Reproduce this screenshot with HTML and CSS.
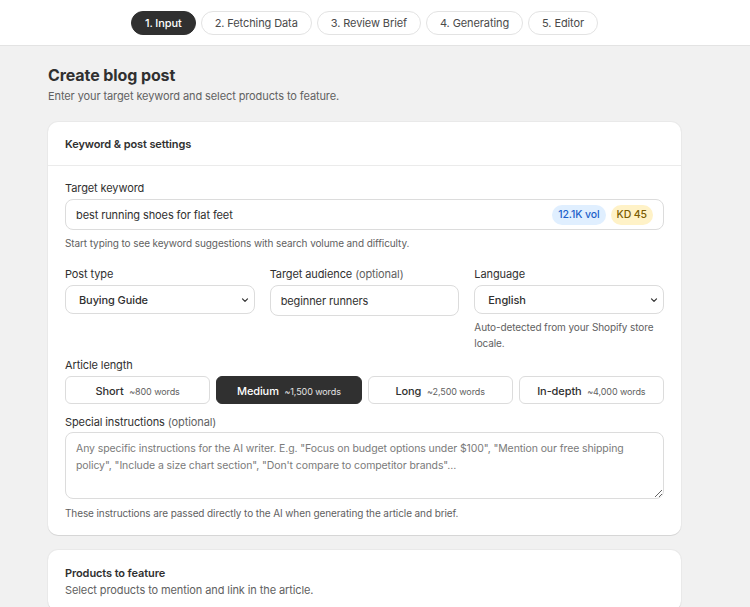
FILE: index.html
```html
<!DOCTYPE html>
<html lang="en">
<head>
    <meta charset="UTF-8">
    <meta name="viewport" content="width=device-width, initial-scale=1.0">
    <title>Create blog post</title>
    <link rel="stylesheet" href="styles.css">
</head>
<body>
    <div class="topbar">
        <div class="steps">
            <span class="step active">1. Input</span>
            <span class="step">2. Fetching Data</span>
            <span class="step">3. Review Brief</span>
            <span class="step">4. Generating</span>
            <span class="step">5. Editor</span>
        </div>
    </div>

    <div class="page">
        <h1 class="page-title">Create blog post</h1>
        <p class="page-sub">Enter your target keyword and select products to feature.</p>

        <div class="card">
            <div class="card-header">Keyword &amp; post settings</div>
            <div class="card-body">
                <div class="field">
                    <label class="label">Target keyword</label>
                    <div class="input keyword-input">
                        <span class="value">best running shoes for flat feet</span>
                        <span class="badge badge-blue">12.1K vol</span>
                        <span class="badge badge-yellow">KD 45</span>
                    </div>
                    <p class="help">Start typing to see keyword suggestions with search volume and difficulty.</p>
                </div>

                <div class="row-3">
                    <div class="field">
                        <label class="label">Post type</label>
                        <div class="input select">
                            <span class="value strong">Buying Guide</span>
                            <svg class="chevron" width="10" height="10" viewBox="0 0 10 10"><path d="M2.5 3.8 5 6.3 7.5 3.8" fill="none" stroke="#303030" stroke-width="1.2" stroke-linecap="round" stroke-linejoin="round"/></svg>
                        </div>
                    </div>
                    <div class="field">
                        <label class="label">Target audience <span class="muted">(optional)</span></label>
                        <div class="input tall">
                            <span class="value">beginner runners</span>
                        </div>
                    </div>
                    <div class="field">
                        <label class="label">Language</label>
                        <div class="input select">
                            <span class="value strong">English</span>
                            <svg class="chevron" width="10" height="10" viewBox="0 0 10 10"><path d="M2.5 3.8 5 6.3 7.5 3.8" fill="none" stroke="#303030" stroke-width="1.2" stroke-linecap="round" stroke-linejoin="round"/></svg>
                        </div>
                        <p class="help">Auto-detected from your Shopify store locale.</p>
                    </div>
                </div>

                <div class="field">
                    <label class="label">Article length</label>
                    <div class="lengths">
                        <button class="length"><b>Short</b> <small>~800 words</small></button>
                        <button class="length selected"><b>Medium</b> <small>~1,500 words</small></button>
                        <button class="length"><b>Long</b> <small>~2,500 words</small></button>
                        <button class="length"><b>In-depth</b> <small>~4,000 words</small></button>
                    </div>
                </div>

                <div class="field last">
                    <label class="label">Special instructions <span class="muted">(optional)</span></label>
                    <textarea class="textarea" placeholder="Any specific instructions for the AI writer. E.g. &quot;Focus on budget options under $100&quot;, &quot;Mention our free shipping policy&quot;, &quot;Include a size chart section&quot;, &quot;Don't compare to competitor brands&quot;..."></textarea>
                    <p class="help">These instructions are passed directly to the AI when generating the article and brief.</p>
                </div>
            </div>
        </div>

        <div class="card">
            <div class="card-body products">
                <div class="products-title">Products to feature</div>
                <p class="products-sub">Select products to mention and link in the article.</p>
            </div>
        </div>
    </div>
</body>
</html>
```

FILE: styles.css
```css
* {
    box-sizing: border-box;
}
body {
    margin: 0;
    font-family: Inter, "Noto Sans", sans-serif;
    background-color: #f1f1f1;
    color: #303030;
    font-size: 11px;
    letter-spacing: -0.1px;
}
.topbar {
    background-color: #ffffff;
    border-bottom: 1px solid #e3e3e3;
    height: 46px;
}
.steps {
    width: 633px;
    margin-left: 48px;
    display: flex;
    justify-content: center;
    gap: 5px;
    padding-top: 11px;
}
.step {
    height: 24px;
    line-height: 22px;
    padding: 0 13px;
    border: 1px solid #e3e3e3;
    border-radius: 12px;
    color: #4a4a4a;
    background-color: #ffffff;
    font-size: 11px;
}
.step.active {
    background-color: #303030;
    border-color: #303030;
    color: #ffffff;
    font-weight: 500;
}
.page {
    width: 633px;
    margin-left: 48px;
    padding-top: 18px;
}
.page-title {
    margin: 0;
    font-size: 16px;
    font-weight: 700;
    color: #303030;
    line-height: 22px;
}
.page-sub {
    margin: 2px 0 0;
    color: #616161;
    font-size: 11px;
    line-height: 16px;
}
.card {
    background-color: #ffffff;
    border-radius: 10px;
    box-shadow: 0 1px 0 rgba(0, 0, 0, 0.08), 0 0 0 1px rgba(0, 0, 0, 0.03);
    margin-top: 18px;
}
.card + .card {
    margin-top: 15px;
}
.card-header {
    padding: 13px 17px 12px;
    font-weight: 600;
    font-size: 11px;
    line-height: 18px;
    border-bottom: 1px solid #ebebeb;
}
.card-body {
    padding: 14px 17px 14px;
}
.field {
    margin-bottom: 10px;
}
.field.last {
    margin-bottom: 0;
}
.label {
    display: block;
    font-size: 11px;
    line-height: 16px;
    margin-bottom: 3px;
    color: #303030;
}
.muted {
    color: #616161;
}
.input {
    display: flex;
    align-items: center;
    border: 1px solid #dcdcdc;
    border-radius: 8px;
    height: 31px;
    padding: 0 10px;
    background-color: #ffffff;
}
.input .value {
    flex: 1;
    font-size: 11px;
}
.input .value.strong {
    font-weight: 500;
}
.input.tall {
    height: 31px;
}
.select {
    height: 29px;
    padding: 0 4px 0 13px;
}
.keyword-input {
    padding-right: 10px;
    gap: 5px;
}
.badge {
    height: 20px;
    line-height: 20px;
    padding: 0 6px;
    border-radius: 10px;
    font-size: 10.5px;
    font-weight: 500;
}
.badge-blue {
    background-color: #e0efff;
    color: #1d5fc9;
}
.badge-yellow {
    background-color: #fff2c7;
    color: #7a5c00;
}
.help {
    margin: 5px 0 0;
    color: #616161;
    font-size: 10px;
    line-height: 16px;
}
.row-3 {
    display: grid;
    grid-template-columns: 1fr 1fr 1fr;
    gap: 15px;
    margin-top: 15px;
}
.row-3 .field {
    margin-bottom: 6px;
}
.lengths {
    display: grid;
    grid-template-columns: repeat(4, 1fr);
    gap: 6px;
}
.length {
    height: 28px;
    border: 1px solid #dcdcdc;
    border-radius: 6px;
    background-color: #ffffff;
    font-family: inherit;
    letter-spacing: -0.1px;
    color: #303030;
    cursor: pointer;
}
.length b {
    font-weight: 500;
    font-size: 11px;
}
.length small {
    font-size: 9px;
    color: #616161;
    margin-left: 2px;
}
.length.selected {
    background-color: #303030;
    border-color: #303030;
    color: #ffffff;
}
.length.selected small {
    color: #e3e3e3;
}
.textarea {
    display: block;
    width: 100%;
    height: 67px;
    margin-top: -1px;
    border: 1px solid #dcdcdc;
    border-radius: 8px;
    padding: 7px 10px;
    font-family: inherit;
    font-size: 10.5px;
    letter-spacing: -0.1px;
    line-height: 17px;
    color: #303030;
    resize: vertical;
}
.textarea::placeholder {
    color: #7a7a7a;
}
.field.last .help {
    margin-top: 6px;
}
.products {
    padding-top: 15px;
}
.products-title {
    font-weight: 600;
    font-size: 11px;
    line-height: 16px;
}
.products-sub {
    margin: 2px 0 0;
    color: #616161;
    font-size: 11px;
}
```
